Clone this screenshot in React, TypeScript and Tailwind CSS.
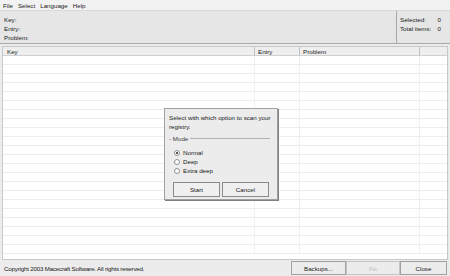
import React from "react"

const rows = Array.from({ length: 22 })

export default function App() {
  return (
    <div className="w-[450px] h-[276px] flex flex-col bg-[#ececec] text-[6.2px] leading-[9px] text-[#202020] overflow-hidden" style={{ fontFamily: '"Liberation Sans", Arial, sans-serif' }}>
      {/* Menu */}
      <div className="h-[11px] flex items-center gap-[5px] px-[3px] bg-[#f2f2f2] border-b border-[#d8d8d8]">
        <span>File</span>
        <span>Select</span>
        <span>Language</span>
        <span>Help</span>
      </div>

      {/* Info panel */}
      <div className="h-[33px] flex bg-[#e6e6e6] border-b border-[#a8a8a8]">
        <div className="flex-1 flex flex-col pt-[4px] pl-[4px]">
          <span>Key:</span>
          <span>Entry:</span>
          <span>Problem:</span>
        </div>
        <div className="w-[54px] border-l border-[#a8a8a8] pt-[4px] pl-[3px] pr-[9px] flex flex-col">
          <div className="flex justify-between"><span>Selected:</span><span>0</span></div>
          <div className="flex justify-between"><span>Total items:</span><span>0</span></div>
        </div>
      </div>

      {/* List */}
      <div className="flex-1 flex flex-col mt-[2px] mx-[2px] border border-[#c8c8c8] bg-white relative">
        <div className="h-[9px] flex bg-[#eeeeee] border-b border-[#d0d0d0]">
          <div className="w-[252px] pl-[4px] border-r border-[#c0c0c0]">Key</div>
          <div className="w-[45px] pl-[3px] border-r border-[#c0c0c0]">Entry</div>
          <div className="w-[120px] pl-[3px] border-r border-[#c0c0c0]">Problem</div>
          <div className="flex-1" />
        </div>
        <div className="flex-1 flex flex-col overflow-hidden">
          {rows.map((_, i) => (
            <div key={i} className="h-[9px] shrink-0 flex border-b border-[#ececec]">
              <div className="w-[252px] border-r border-[#f0f0f0]" />
              <div className="w-[45px] border-r border-[#f0f0f0]" />
              <div className="w-[120px] border-r border-[#f0f0f0]" />
              <div className="flex-1" />
            </div>
          ))}
        </div>

        {/* Dialog */}
        <div className="absolute left-[161px] top-[61px] w-[114px] h-[92px] bg-[#ececec] border border-[#a0a0a0] shadow-[1px_1px_0_#808080] px-[4px] pt-[4px]">
          <p className="leading-[9px]">Select with which option to scan your registry.</p>
          <div className="mt-[3px] flex items-center gap-[2px]">
            <span className="text-[#404040]">- Mode</span>
            <div className="flex-1 h-px bg-[#b0b0b0] mr-[3px]" />
          </div>
          <div className="mt-[5px] pl-[5px] flex flex-col">
            {["Normal", "Deep", "Extra deep"].map((l, i) => (
              <div key={l} className="flex items-center gap-[3px] h-[9px]">
                <span className="w-[6px] h-[6px] rounded-full border border-[#909090] bg-white flex items-center justify-center">
                  {i === 0 && <span className="w-[2px] h-[2px] rounded-full bg-[#202020]" />}
                </span>
                <span>{l}</span>
              </div>
            ))}
          </div>
          <div className="mt-[7px] flex gap-[2px] px-[4px]">
            <button className="flex-1 h-[15px] bg-[#f0f0f0] border border-[#8a8a8a] text-[6.2px]">Start</button>
            <button className="flex-1 h-[15px] bg-[#f0f0f0] border border-[#8a8a8a] text-[6.2px]">Cancel</button>
          </div>
        </div>
      </div>

      {/* Status */}
      <div className="h-[16px] flex items-center pl-[4px] pr-[3px]">
        <span className="flex-1 tracking-[-0.2px]">Copyright 2003 Macecraft Software. All rights reserved.</span>
        <button className="w-[55px] h-[14px] bg-[#ececec] border border-[#a0a0a0] text-[6.2px]">Backups...</button>
        <button className="w-[54px] h-[14px] bg-[#ececec] border border-[#c4c4c4] text-[6.2px] text-[#b8b8b8]">Fix</button>
        <button className="w-[47px] h-[14px] bg-[#ececec] border border-[#a0a0a0] text-[6.2px]">Close</button>
      </div>
    </div>
  )
}
